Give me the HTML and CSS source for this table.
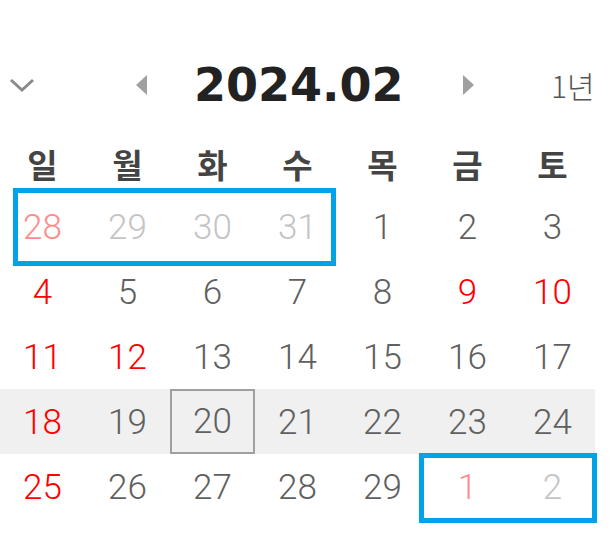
FILE: index.html
```html
<!DOCTYPE html>
<html lang="ko">
<head>
<meta charset="utf-8">
<link rel="stylesheet" href="styles.css">
</head>
<body>
<div class="toolbar">
  <svg class="chev" width="26" height="16" viewBox="0 0 26 16"><polyline points="2,3 13,13 24,3" fill="none" stroke="#8a8a8a" stroke-width="3"/></svg>
  <svg class="prev" width="13" height="20" viewBox="0 0 13 20"><polygon points="12,0 12,20 1,10" fill="#a0a0a0"/></svg>
  <div class="title">2024.02</div>
  <svg class="next" width="13" height="20" viewBox="0 0 13 20"><polygon points="1,0 1,20 12,10" fill="#a0a0a0"/></svg>
  <div class="range">1년</div>
</div>
<div class="cal">
  <div class="wd">일</div><div class="wd">월</div><div class="wd">화</div><div class="wd">수</div><div class="wd">목</div><div class="wd">금</div><div class="wd">토</div>

  <div class="d prev-red">28</div><div class="d muted">29</div><div class="d muted">30</div><div class="d muted">31</div><div class="d">1</div><div class="d">2</div><div class="d">3</div>

  <div class="d red">4</div><div class="d">5</div><div class="d">6</div><div class="d">7</div><div class="d">8</div><div class="d red">9</div><div class="d red">10</div>

  <div class="d red">11</div><div class="d red">12</div><div class="d">13</div><div class="d">14</div><div class="d">15</div><div class="d">16</div><div class="d">17</div>

  <div class="d red week">18</div><div class="d week">19</div><div class="d week today">20</div><div class="d week">21</div><div class="d week">22</div><div class="d week">23</div><div class="d week">24</div>

  <div class="d red">25</div><div class="d">26</div><div class="d">27</div><div class="d">28</div><div class="d">29</div><div class="d prev-red">1</div><div class="d muted">2</div>

  <div class="mark mark-a"></div>
  <div class="mark mark-b"></div>
</div>
</body>
</html>
```

FILE: styles.css
```css
html, body {
  margin: 0;
  padding: 0;
  background: #fff;
  overflow: hidden;
}
body {
  width: 615px;
  height: 538px;
  font-family: "Roboto", "Noto Sans CJK KR", sans-serif;
}
.toolbar {
  margin-top: 50px;
  height: 70px;
  display: flex;
  align-items: center;
  white-space: nowrap;
}
.chev { margin-left: 9px; flex: none; }
.prev { margin-left: 100px; flex: none; }
.title {
  margin-left: 46px;
  width: 211px;
  flex: none;
  font-family: "DejaVu Sans", sans-serif;
  font-weight: bold;
  font-size: 46px;
  color: #222;
  line-height: 1;
}
.next { margin-left: 57px; flex: none; }
.range {
  margin-left: 76px;
  font-family: "Noto Sans CJK KR", sans-serif;
  font-weight: 300;
  font-size: 30px;
  color: #555;
  flex: none;
}
.cal {
  position: relative;
  margin-top: 9px;
  width: 595px;
  display: grid;
  grid-template-columns: repeat(7, 85px);
  grid-auto-rows: 65px;
}
.wd {
  display: flex;
  align-items: center;
  justify-content: center;
  padding-top: 5px;
  box-sizing: border-box;
  font-family: "Noto Sans CJK KR", sans-serif;
  font-weight: bold;
  font-size: 33px;
  color: #444;
}
.d {
  display: flex;
  align-items: center;
  justify-content: center;
  padding-top: 2px;
  font-family: "Roboto", sans-serif;
  font-weight: 300;
  font-size: 35px;
  color: #606060;
  box-sizing: border-box;
}
.red { color: #ff0000; }
.muted { color: #c4c4c4; }
.prev-red { color: #ff8c8c; }
.week { background: #f0f0f0; }
.today { border: 2px solid #a0a0a0; padding-top: 0; }
.mark {
  position: absolute;
  border: 5px solid #00a2e8;
  box-sizing: border-box;
}
.mark-a { left: 13px; top: 59px; width: 323px; height: 78px; }
.mark-b { left: 419px; top: 324px; width: 178px; height: 70px; }
```
